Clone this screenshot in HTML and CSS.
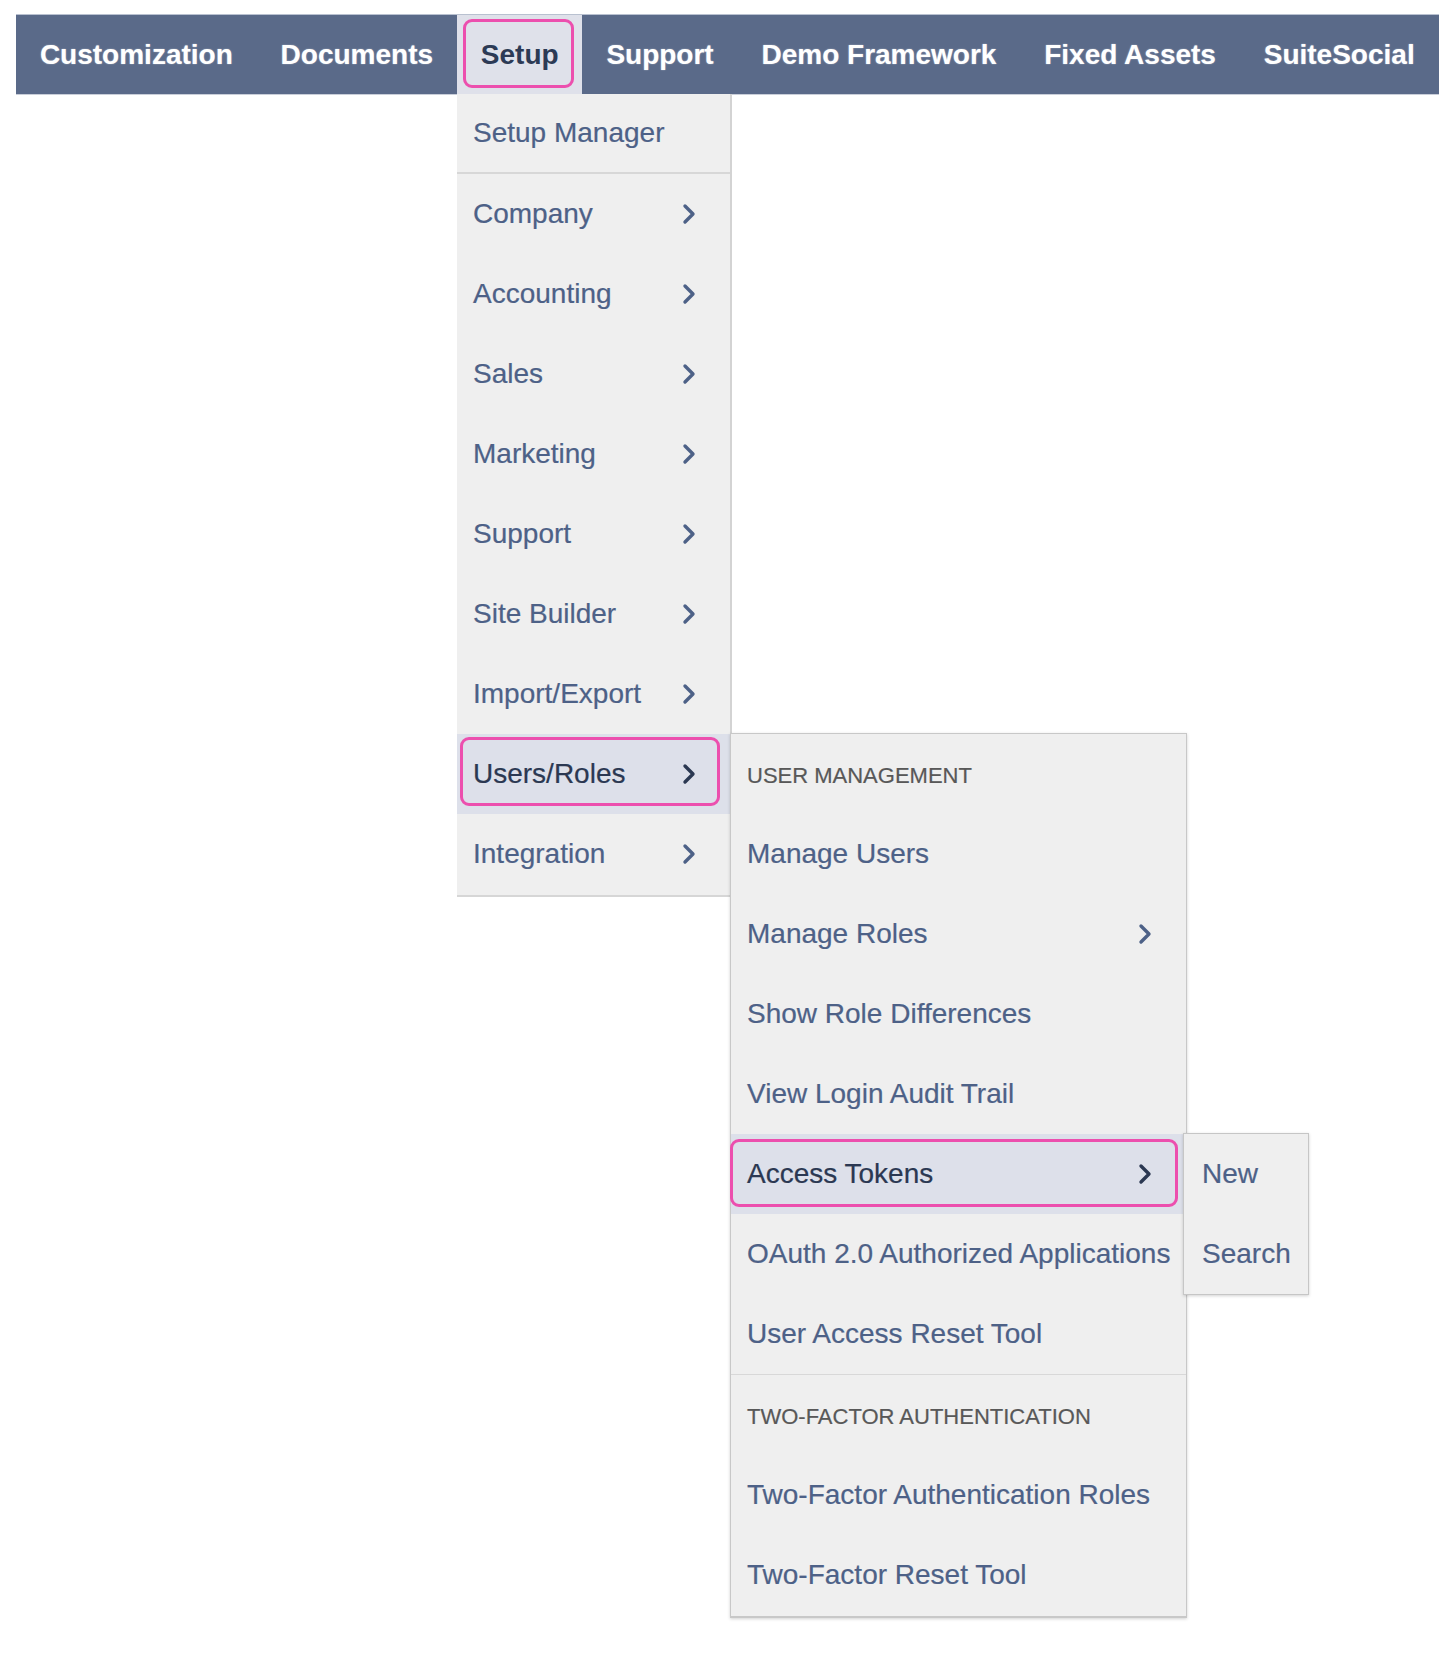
FILE: index.html
```html
<!DOCTYPE html>
<html lang="en">
<head>
<meta charset="utf-8">
<title>Setup menu</title>
<link rel="stylesheet" href="styles.css">
</head>
<body>
<div class="app">
  <nav class="topnav">
    <div class="nav-item">Customization</div>
    <div class="nav-item">Documents</div>
    <div class="nav-item nav-item--active">Setup<span class="ring ring--tab"></span></div>
    <div class="nav-item">Support</div>
    <div class="nav-item">Demo Framework</div>
    <div class="nav-item">Fixed Assets</div>
    <div class="nav-item">SuiteSocial</div>
  </nav>

  <div class="menu menu--main">
    <div class="menu-item menu-item--sep"><span>Setup Manager</span></div>
    <div class="menu-item"><span>Company</span><svg class="chev" viewBox="0 0 16 22"><path d="M4 3 L12 11 L4 19"/></svg></div>
    <div class="menu-item"><span>Accounting</span><svg class="chev" viewBox="0 0 16 22"><path d="M4 3 L12 11 L4 19"/></svg></div>
    <div class="menu-item"><span>Sales</span><svg class="chev" viewBox="0 0 16 22"><path d="M4 3 L12 11 L4 19"/></svg></div>
    <div class="menu-item"><span>Marketing</span><svg class="chev" viewBox="0 0 16 22"><path d="M4 3 L12 11 L4 19"/></svg></div>
    <div class="menu-item"><span>Support</span><svg class="chev" viewBox="0 0 16 22"><path d="M4 3 L12 11 L4 19"/></svg></div>
    <div class="menu-item"><span>Site Builder</span><svg class="chev" viewBox="0 0 16 22"><path d="M4 3 L12 11 L4 19"/></svg></div>
    <div class="menu-item"><span>Import/Export</span><svg class="chev" viewBox="0 0 16 22"><path d="M4 3 L12 11 L4 19"/></svg></div>
    <div class="menu-item menu-item--open">
      <span>Users/Roles</span><svg class="chev" viewBox="0 0 16 22"><path d="M4 3 L12 11 L4 19"/></svg>
      <span class="ring ring--users"></span>
      <div class="menu menu--sub">
        <div class="menu-heading">User Management</div>
        <div class="menu-item"><span>Manage Users</span></div>
        <div class="menu-item"><span>Manage Roles</span><svg class="chev" viewBox="0 0 16 22"><path d="M4 3 L12 11 L4 19"/></svg></div>
        <div class="menu-item"><span>Show Role Differences</span></div>
        <div class="menu-item"><span>View Login Audit Trail</span></div>
        <div class="menu-item menu-item--open">
          <span>Access Tokens</span><svg class="chev" viewBox="0 0 16 22"><path d="M4 3 L12 11 L4 19"/></svg>
          <span class="ring ring--tokens"></span>
          <div class="menu menu--leaf">
            <div class="menu-item"><span>New</span></div>
            <div class="menu-item"><span>Search</span></div>
          </div>
        </div>
        <div class="menu-item"><span>OAuth 2.0 Authorized Applications</span></div>
        <div class="menu-item menu-item--sep1"><span>User Access Reset Tool</span></div>
        <div class="menu-heading">Two-Factor Authentication</div>
        <div class="menu-item"><span>Two-Factor Authentication Roles</span></div>
        <div class="menu-item"><span>Two-Factor Reset Tool</span></div>
      </div>
    </div>
    <div class="menu-item"><span>Integration</span><svg class="chev" viewBox="0 0 16 22"><path d="M4 3 L12 11 L4 19"/></svg></div>
  </div>
</div>
</body>
</html>
```

FILE: styles.css
```css
* {
  box-sizing: border-box;
}

html, body {
  margin: 0;
  padding: 0;
  background: #ffffff;
}

body {
  font-family: "Liberation Sans", Arial, Helvetica, sans-serif;
}

.app {
  position: relative;
  padding: 14px 0 0 16px;
  min-height: 1674px;
}

.topnav {
  display: inline-flex;
  height: 80px;
  background: #5a6a89;
  border-top: 1px solid #b9c1d0;
  box-shadow: 0 1px 0 #c9ced9;
}

.nav-item {
  position: relative;
  padding: 0 23.9px;
  line-height: 79px;
  font-size: 28px;
  font-weight: bold;
  color: #ffffff;
  white-space: nowrap;
  text-shadow: 0 0 1.5px rgba(255, 255, 255, 0.55);
}

.nav-item--active {
  background: #dfe1ea;
  color: #2c3a55;
  text-shadow: none;
}

.ring {
  position: absolute;
  border: 3px solid #ec4fae;
  border-radius: 9px;
  pointer-events: none;
  z-index: 5;
}

.ring--tab {
  top: 4px;
  bottom: 6px;
  left: 6px;
  right: 8px;
}

.ring--users {
  top: 3px;
  bottom: 8px;
  left: 3px;
  right: 10px;
}

.ring--tokens {
  top: 5px;
  bottom: 7px;
  left: -1px;
  right: 8px;
}

/* Dropdown menus */
.menu {
  position: absolute;
  background: #efefef;
  font-size: 28px;
  color: #4d6187;
  white-space: nowrap;
  -webkit-text-stroke: 0.2px currentColor;
}

.menu--main {
  top: 94px;
  left: 457px;
  width: 275px;
  padding-bottom: 1px;
  border-right: 2px solid #d3d3d3;
  border-bottom: 2px solid #d6d6d6;
  z-index: 2;
}

.menu--sub {
  top: -1px;
  left: 100%;
  width: 457px;
  padding-bottom: 1px;
  border: 1px solid #c8c8c8;
  border-bottom-width: 2px;
  box-shadow: 0 1px 3px rgba(0, 0, 0, 0.18);
  z-index: 3;
}

.menu--leaf {
  top: -1px;
  left: calc(100% - 3px);
  width: 126px;
  border: 1.5px solid #c6c6c6;
  box-shadow: 0 1px 3px rgba(0, 0, 0, 0.18);
  z-index: 4;
}

.menu-item {
  position: relative;
  display: flex;
  align-items: center;
  justify-content: space-between;
  height: 80px;
  padding: 0 33px 0 16px;
}

.menu--leaf .menu-item {
  padding: 0 8px 0 18px;
}

.menu-item--sep {
  height: 80px;
  border-bottom: 2px solid #d7d7d7;
}

.menu-item--sep1 {
  height: 81px;
  border-bottom: 1px solid #d8d8d8;
}

.menu-item--open {
  background: #dde0ea;
  color: #2b3852;
}

.menu-item--open .menu {
  color: #4d6187;
}

.menu-item--open .menu .menu-item--open {
  color: #2b3852;
}

.menu-heading {
  display: flex;
  align-items: center;
  height: 80px;
  padding: 4px 16px 0;
  font-size: 22px;
  text-transform: uppercase;
  color: #585858;
}

.chev {
  width: 16px;
  height: 22px;
  flex: none;
  fill: none;
  stroke: currentColor;
  stroke-width: 3.4;
  stroke-linecap: round;
  stroke-linejoin: round;
}
```
